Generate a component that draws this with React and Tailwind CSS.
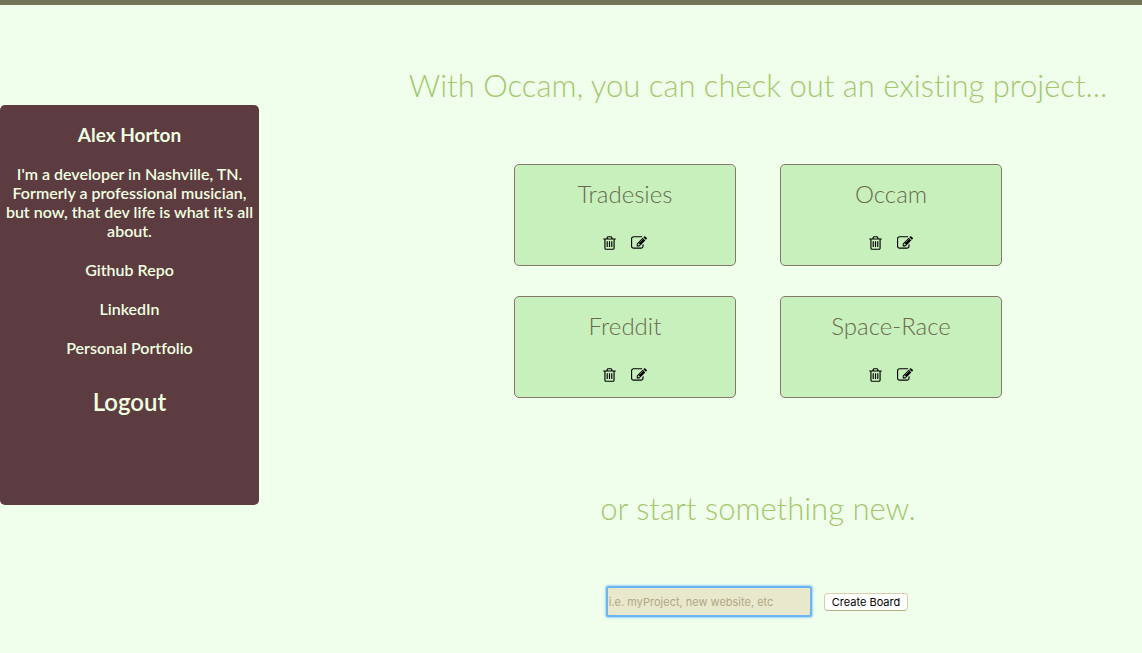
const projects = ["Tradesies", "Occam", "Freddit", "Space-Race"];

const links = ["Github Repo", "LinkedIn", "Personal Portfolio"];

function TrashIcon() {
  return (
    <svg viewBox="192 0 1408 1792" className="h-4 w-[13px]" fill="currentColor" aria-hidden="true">
      <path d="M704 736v576q0 14-9 23t-23 9h-64q-14 0-23-9t-9-23v-576q0-14 9-23t23-9h64q14 0 23 9t9 23zm256 0v576q0 14-9 23t-23 9h-64q-14 0-23-9t-9-23v-576q0-14 9-23t23-9h64q14 0 23 9t9 23zm256 0v576q0 14-9 23t-23 9h-64q-14 0-23-9t-9-23v-576q0-14 9-23t23-9h64q14 0 23 9t9 23zm128 724v-948h-896v948q0 22 7 40.5t14.5 27 10.5 8.5h832q3 0 10.5-8.5t14.5-27 7-40.5zm-672-1076h448l-48-117q-7-9-17-11h-317q-10 2-17 11zm928 32v64q0 14-9 23t-23 9h-96v948q0 83-47 143.5t-113 60.5h-832q-66 0-113-58.5t-47-141.5v-952h-96q-14 0-23-9t-9-23v-64q0-14 9-23t23-9h309l70-167q15-37 54-63t79-26h320q40 0 79 26t54 63l70 167h309q14 0 23 9t9 23z" />
    </svg>
  );
}

function EditIcon() {
  return (
    <svg viewBox="0 0 1792 1792" className="size-4" fill="currentColor" aria-hidden="true">
      <path d="M888 1184l116-116-152-152-116 116v56h96v96h56zm440-720q-16-16-33 1l-350 350q-17 17-1 33t33-1l350-350q17-17 1-33zm80 594v190q0 119-84.5 203.5t-203.5 84.5h-832q-119 0-203.5-84.5t-84.5-203.5v-832q0-119 84.5-203.5t203.5-84.5h832q63 0 117 25 15 7 18 23 3 17-9 29l-49 49q-14 14-32 8-23-6-45-6h-832q-66 0-113 47t-47 113v832q0 66 47 113t113 47h832q66 0 113-47t47-113v-126q0-13 9-22l64-64q15-15 35-7t20 29zm-96-738l288 288-672 672h-288v-288zm444 132l-92 92-288-288 92-92q28-28 68-28t68 28l152 152q28 28 28 68t-28 68z" />
    </svg>
  );
}

function ProjectCard({ name }) {
  return (
    <article className="flex flex-col items-center rounded-[5px] border border-[#84796a] bg-[#c8f0bc] pt-[13px] pb-3.5">
      <h2 className="text-2xl leading-8 font-light text-[#6a6a50]">{name}</h2>
      <div className="mt-[25px] flex gap-[15px] text-black">
        <button type="button" aria-label={`Delete ${name}`}>
          <TrashIcon />
        </button>
        <button type="button" aria-label={`Edit ${name}`}>
          <EditIcon />
        </button>
      </div>
    </article>
  );
}

export default function App() {
  return (
    <div className="min-h-screen border-t-[5px] border-[#73735a] bg-[#f0ffeb] font-['Lato',sans-serif] [font-variant-ligatures:none]">
      <div className="flex items-start">
        <aside className="mt-[100px] flex min-h-[400px] w-[259px] shrink-0 flex-col items-center gap-5 rounded-[5px] bg-[#5c3c40] px-1 pt-[21px] text-center text-base leading-[19px] font-semibold text-[#f0ffe0]">
          <h3 className="text-[19px] leading-[18px] font-bold">Alex Horton</h3>
          <p>
            I'm a developer in Nashville, TN. Formerly a professional musician, but now, that dev life is what
            it's all about.
          </p>
          {links.map((label) => (
            <a key={label} href="#">
              {label}
            </a>
          ))}
          <a href="#" className="mt-2 text-2xl leading-[34px]">
            Logout
          </a>
        </aside>

        <main className="ml-[115px] flex flex-1 flex-col items-center pb-8">
          <h1 className="mt-[60px] text-[31px] leading-10 font-light text-[#a2c76c]">
            With Occam, you can check out an existing project...
          </h1>
          <section className="mt-[59px] grid grid-cols-[222px_222px] gap-x-11 gap-y-[30px]">
            {projects.map((name) => (
              <ProjectCard key={name} name={name} />
            ))}
          </section>
          <h1 className="mt-[90px] text-[31px] leading-10 font-light text-[#a2c76c]">or start something new.</h1>
          <form className="mt-[60px] flex items-center gap-3.5" onSubmit={(event) => event.preventDefault()}>
            <input
              type="text"
              aria-label="Project name"
              placeholder="i.e. myProject, new website, etc"
              className="h-[27px] w-[202px] rounded-[1px] bg-[#e8e8cd] px-px font-['Inter',sans-serif] text-[11px] text-[#5c3c40] shadow-[0_0_2px_3px_#a3d3f7] ring-2 ring-[#6db4f5] outline-none placeholder:text-[#b3a683]"
            />
            <button
              type="submit"
              className="h-[18px] rounded-sm border border-[#d5cfaa] border-b-[#b8b088] bg-white px-[7px] font-['Inter',sans-serif] text-[11px] leading-4 text-black"
            >
              Create Board
            </button>
          </form>
        </main>
      </div>
    </div>
  );
}
